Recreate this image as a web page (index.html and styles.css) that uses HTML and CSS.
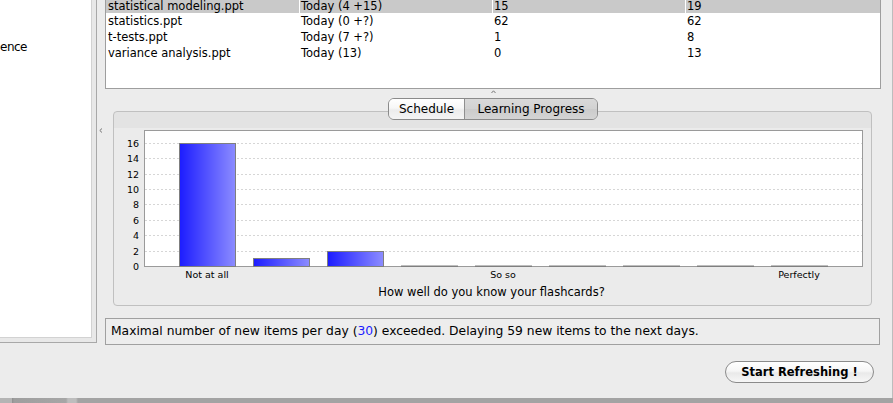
FILE: index.html
```html
<!DOCTYPE html>
<html>
<head>
<meta charset="utf-8">
<link rel="stylesheet" href="styles.css">
</head>
<body>
<div class="window">
  <div class="main">
    <aside class="left">
      <div class="left-inner">
        <div class="tree-item">ence</div>
      </div>
    </aside>
    <div class="vdivider">
      <svg class="vgrip" width="4" height="5" viewBox="0 0 4 5"><path d="M3 0.5 L0.8 2.5 L3 4.5" fill="none" stroke="#777" stroke-width="1"/></svg>
    </div>
    <section class="right">
      <div class="table">
        <div class="rows">
          <div class="row sel first"><div class="cell">statistical modeling.ppt</div><div class="cell">Today (4 +15)</div><div class="cell">15</div><div class="cell">19</div></div>
          <div class="row"><div class="cell">statistics.ppt</div><div class="cell">Today (0 +?)</div><div class="cell">62</div><div class="cell">62</div></div>
          <div class="row"><div class="cell">t-tests.ppt</div><div class="cell">Today (7 +?)</div><div class="cell">1</div><div class="cell">8</div></div>
          <div class="row"><div class="cell">variance analysis.ppt</div><div class="cell">Today (13)</div><div class="cell">0</div><div class="cell">13</div></div>
        </div>
      </div>
      <div class="hdivider">
        <svg class="hgrip" width="5" height="4" viewBox="0 0 5 4"><path d="M0.5 3 L2.5 0.8 L4.5 3" fill="none" stroke="#777" stroke-width="1"/></svg>
      </div>
      <div class="tabpane">
        <div class="tabbar">
          <div class="segs">
            <div class="seg seg-schedule">Schedule</div>
            <div class="seg seg-progress selected">Learning Progress</div>
          </div>
        </div>
        <div class="chart-box">
          <svg class="plot" width="749" height="137" viewBox="0 0 749 137">
            <defs>
              <linearGradient id="barfill" x1="0" y1="0" x2="1" y2="0">
                <stop offset="0" stop-color="#1c1cff"/>
                <stop offset="1" stop-color="#8c8cff"/>
              </linearGradient>
            </defs>
            <rect x="30.5" y="0.5" width="718" height="136" fill="#fff" stroke="#9a9a9a"/>
            <g stroke="#d6d6d6" stroke-dasharray="2,2" stroke-width="1">
              <line x1="31" x2="748" y1="121.5" y2="121.5"/>
              <line x1="31" x2="748" y1="105.5" y2="105.5"/>
              <line x1="31" x2="748" y1="90.5" y2="90.5"/>
              <line x1="31" x2="748" y1="74.5" y2="74.5"/>
              <line x1="31" x2="748" y1="59.5" y2="59.5"/>
              <line x1="31" x2="748" y1="44.5" y2="44.5"/>
              <line x1="31" x2="748" y1="28.5" y2="28.5"/>
              <line x1="31" x2="748" y1="13.5" y2="13.5"/>
            </g>
            <g class="ylabels" text-anchor="end">
              <text x="25" y="139.5">0</text>
              <text x="25" y="124.5">2</text>
              <text x="25" y="108.5">4</text>
              <text x="25" y="93.5">6</text>
              <text x="25" y="77.5">8</text>
              <text x="25" y="62.5">10</text>
              <text x="25" y="47.5">12</text>
              <text x="25" y="31.5">14</text>
              <text x="25" y="16.5">16</text>
            </g>
            <g fill="url(#barfill)" stroke="#7f7f7f" stroke-width="1">
              <rect x="65.5" y="13.5" width="56" height="123"/>
              <rect x="139.5" y="128.5" width="56" height="8"/>
              <rect x="213.5" y="121.5" width="56" height="15"/>
              <rect x="287.5" y="136" width="56" height="0.5"/>
              <rect x="361.5" y="136" width="56" height="0.5"/>
              <rect x="435.5" y="136" width="56" height="0.5"/>
              <rect x="509.5" y="136" width="56" height="0.5"/>
              <rect x="583.5" y="136" width="56" height="0.5"/>
              <rect x="657.5" y="136" width="56" height="0.5"/>
            </g>
          </svg>
          <div class="cats">
            <span class="cat">Not at all</span><span class="cat"></span><span class="cat"></span><span class="cat"></span><span class="cat">So so</span><span class="cat"></span><span class="cat"></span><span class="cat"></span><span class="cat">Perfectly</span>
          </div>
          <div class="axis-title">How well do you know your flashcards?</div>
        </div>
      </div>
      <div class="message">Maximal number of new items per day (<span class="num">30</span>) exceeded. Delaying 59 new items to the next days.</div>
      <div class="actions">
        <button class="btn">Start Refreshing !</button>
      </div>
    </section>
  </div>
  <div class="bottom-strip"></div>
</div>
</body>
</html>
```

FILE: styles.css
```css
html, body {
  margin: 0;
  padding: 0;
}
body {
  width: 893px;
  height: 403px;
  overflow: hidden;
  background: #ececec;
  font-family: "DejaVu Sans", "Verdana", sans-serif;
  color: #000;
}
.window {
  display: flex;
  flex-direction: column;
  height: 403px;
}
.main {
  display: flex;
  height: 398px;
}

/* left tree panel */
.left {
  width: 97px;
  height: 343px;
  box-sizing: border-box;
  border-right: 1px solid #a8a8a8;
  border-bottom: 1px solid #a8a8a8;
  padding: 0 4px 4px 0;
  background: #e8e8e8;
  flex: none;
}
.left-inner {
  height: 100%;
  box-sizing: border-box;
  background: #fff;
  border-right: 1px solid #d2d2d2;
  border-bottom: 1px solid #d2d2d2;
  padding-top: 39px;
  overflow: hidden;
}
.tree-item {
  font-size: 12px;
  line-height: 16px;
  letter-spacing: -0.5px;
  white-space: nowrap;
}

/* split pane divider */
.vdivider {
  width: 8px;
  flex: none;
  display: flex;
  justify-content: center;
  align-items: flex-start;
}
.vgrip {
  display: block;
  margin-top: 128px;
}

/* right section */
.right {
  flex: 1;
  display: flex;
  flex-direction: column;
  padding-right: 11px;
  border-right: 1px solid #bdbdbd;
}

/* table */
.table {
  height: 89px;
  box-sizing: border-box;
  background: #fff;
  border: 1px solid #9e9e9e;
  border-top: none;
  overflow: hidden;
}
.row {
  display: grid;
  grid-template-columns: 194px 193px 193px 1fr;
  height: 16px;
  line-height: 16px;
  font-size: 11.5px;
}
.row.first {
  height: 13px;
  line-height: 13px;
}
.row.sel {
  background: #c9c9c9;
}
.cell {
  padding-left: 1px;
  white-space: nowrap;
  overflow: hidden;
  border-right: 1px solid transparent;
}
.cell:first-child {
  padding-left: 2px;
}
.cell:last-child {
  border-right: none;
}
.row.sel .cell {
  border-right-color: #fff;
}
.row.sel .cell:last-child {
  border-right: none;
}

.hdivider {
  height: 9px;
  display: flex;
  justify-content: center;
  align-items: flex-start;
}
.hgrip {
  display: block;
  margin-top: 1px;
}

/* tabbed pane */
.tabpane {
  display: flex;
  flex-direction: column;
}
.tabbar {
  display: flex;
  justify-content: center;
  position: relative;
  z-index: 1;
}
.segs {
  display: flex;
  height: 22px;
  box-sizing: border-box;
  border: 1px solid #8a8a8a;
  border-radius: 6px;
  overflow: hidden;
  font-size: 12px;
  line-height: 20px;
}
.seg {
  text-align: center;
  white-space: nowrap;
}
.seg-schedule {
  width: 75px;
  border-right: 1px solid #8f8f8f;
  background: linear-gradient(#ffffff, #f7f7f7 45%, #ececec 55%, #f4f4f4);
}
.seg-progress {
  width: 132px;
  background: linear-gradient(#d9d9d9, #d2d2d2 50%, #cbcbcb 50%, #d4d4d4);
}

.chart-box {
  margin: -9px 9px 0 8px;
  height: 195px;
  box-sizing: border-box;
  border: 1px solid #c0c0c0;
  border-radius: 4px;
  background: linear-gradient(#e3e3e3 0, #e3e3e3 16px, #ebebeb 16px);
  padding-top: 18px;
}
.plot {
  display: block;
  overflow: visible;
}
.ylabels {
  font-family: "DejaVu Sans", sans-serif;
  font-size: 9.5px;
  fill: #000;
}
.cats {
  display: flex;
  margin-left: 56px;
  height: 16px;
  line-height: 16px;
  font-size: 9.5px;
}
.cat {
  width: 74px;
  text-align: center;
  white-space: nowrap;
  flex: none;
}
.axis-title {
  height: 18px;
  line-height: 18px;
  text-align: center;
  font-size: 11.5px;
  padding-right: 2px;
}

/* message */
.message {
  margin-top: 12px;
  margin-right: 1px;
  height: 27px;
  box-sizing: border-box;
  border: 1px solid #a0a0a0;
  padding-left: 5px;
  font-size: 12.3px;
  line-height: 25px;
  white-space: nowrap;
  background: #ededed;
}
.num {
  color: #1a1aff;
}

/* button */
.actions {
  margin-top: 16px;
  display: flex;
  justify-content: flex-end;
  padding-right: 7px;
}
.btn {
  width: 149px;
  height: 22px;
  box-sizing: border-box;
  border: 1px solid #8b8b8b;
  border-radius: 11px;
  background: linear-gradient(#ffffff, #f6f6f6 45%, #e9e9e9 55%, #f7f7f7);
  font-family: "DejaVu Sans", sans-serif;
  font-weight: bold;
  font-size: 11.5px;
  color: #000;
  padding: 0;
  line-height: 20px;
}

.bottom-strip {
  height: 5px;
  background: linear-gradient(90deg, #b4b4b4 0, #b4b4b4 12px, #8e8e8e 12px, #9e9e9e 14px, #a6a6a6 66px, #bdbdbd 68px, #bdbdbd 76px, #a3a3a3 78px, #a3a3a3 100%);
}
```
